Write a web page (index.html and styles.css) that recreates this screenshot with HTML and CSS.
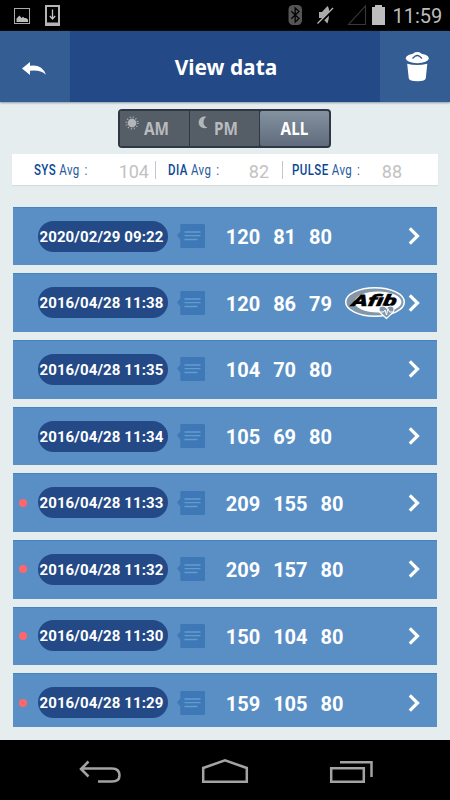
FILE: index.html
```
<!DOCTYPE html>
<html lang="en">
<head>
<meta charset="utf-8">
<title>View data</title>
<link rel="stylesheet" href="styles.css">
</head>
<body>
<svg class="defs" width="0" height="0">
  <symbol id="note" viewBox="0 0 28 26">
    <path d="M0 12.500 3.300 8.500V2.300Q3.300 1 4.600 1H26.800Q28 1 28 2.300V23.700Q28 25 26.800 25H4.600Q3.300 25 3.300 23.700V16.500Z" fill="#3e78b6"/>
    <path d="M7.500 9H23.500M7.500 12.700H23.500M7.500 16.500H20.500" stroke="#659bd0" stroke-width="1.300"/>
  </symbol>
  <symbol id="next" viewBox="0 0 12 18">
    <path d="M1.800 1.300 9.500 9 1.800 16.700" fill="none" stroke="#fff" stroke-width="3.200"/>
  </symbol>
</svg>
<div class="status">
  <svg class="status-left" width="60" height="31" viewBox="0 0 60 31">
    <rect x="14.500" y="8.500" width="15" height="15" fill="none" stroke="#aaa"/>
    <path d="M16.500 22V18.500L19.500 15.500 21.500 18 23 16.800 24.500 18H26L28 19.500V22Z" fill="#bbb"/>
    <path d="M45 5H60V26H45ZM47 7V22.500H58V7Z" fill="#b5b5b5" fill-rule="evenodd"/>
    <path d="M52.500 9.500V18M49.800 16 52.500 19 55.200 16" fill="none" stroke="#c4c4c4" stroke-width="1.300"/>
  </svg>
  <svg class="status-right" width="100" height="31" viewBox="288 0 100 31">
    <rect x="288.500" y="5" width="13.500" height="20" rx="4.500" fill="#555"/>
    <path d="M291.300 11.300 299 18.500 295.200 22V8L299 11.500 291.300 18.800" fill="none" stroke="#050505" stroke-width="1.300"/>
    <path d="M319 12H322L327.500 6Q329.500 8 329 14Q329 20 327.500 23.500L322 18H319Z" fill="#aaa"/>
    <path d="M318 24.500 333.500 9" stroke="#000" stroke-width="3"/>
    <path d="M317.500 23.500 333 8" stroke="#bbb" stroke-width="1.300"/>
    <path d="M348.500 24.500H365.500V6Z" fill="none" stroke="#383838" stroke-width="1.100"/>
    <path d="M372 7H375V5H382V7H385V25H372Z" fill="#bdbdbd"/>
  </svg>
  <span class="clock">11:59</span>
</div>
<header class="header">
  <div class="side">
    <svg width="26" height="14" viewBox="0 0 26 14"><path d="M0 6.500 8 0V3.700Q20 2 24 12.700Q18 7.500 8 8.800V13Z" fill="#fff"/></svg>
  </div>
  <h1 class="title">View data</h1>
  <div class="side trash">
    <svg width="24" height="30" viewBox="0 0 24 30">
      <path d="M2.200 11.800Q12 14.300 22.300 11.800L20.800 26Q20.500 29.300 12.500 29.300Q4 29.300 3.700 26Z" fill="#fff"/>
      <ellipse cx="12.300" cy="6.300" rx="11.500" ry="4.900" fill="#fff"/>
      <path d="M8 5.300Q8.300 1 12.300 1Q16 1 16.500 5.300" fill="none" stroke="#fff" stroke-width="2"/>
      <path d="M7.500 6.500 10 4.200Q12.300 2.800 14.500 4.200L17 6.500" fill="none" stroke="#30588e" stroke-width="1.300"/>
    </svg>
  </div>
</header>
<main class="main">
  <div class="tabs">
    <div class="tab">
      <svg class="tab-icon" width="14" height="14" viewBox="0 0 14 14"><circle cx="7" cy="7" r="4.300" fill="#b3b6b9"/><circle cx="7" cy="7" r="5.700" fill="none" stroke="#aaaeb2" stroke-width="1.900" stroke-dasharray="1 1.984"/></svg>
      <span class="tab-text">AM</span>
    </div>
    <div class="tab">
      <svg class="tab-icon" width="14" height="14" viewBox="0 0 14 14"><path d="M11.500 .8A5.900 5.900 0 1 0 12.500 11.500Q8.500 10 8.500 6.500Q8.500 2.500 11.500 .8Z" fill="#b3b6b9"/></svg>
      <span class="tab-text">PM</span>
    </div>
    <div class="tab tab-on"><span class="tab-text">ALL</span></div>
  </div>
  <div class="averages">
    <div class="avg sys"><span class="avg-label"><b>SYS</b> Avg <span class="colon">:</span></span><span class="avg-value">104</span></div>
    <div class="avg dia"><span class="avg-label"><b>DIA</b> Avg <span class="colon">:</span></span><span class="avg-value">82</span></div>
    <div class="avg pulse"><span class="avg-label"><b>PULSE</b> Avg <span class="colon">:</span></span><span class="avg-value">88</span></div>
  </div>
  <div class="list">
    <div class="row"><i class="dot"></i><span class="date">2020/02/29 09:22</span><svg class="note"><use href="#note"/></svg><div class="values"><span>120</span><span>81</span><span>80</span></div><svg class="next"><use href="#next"/></svg></div>
    <div class="row"><i class="dot"></i><span class="date">2016/04/28 11:38</span><svg class="note"><use href="#note"/></svg><div class="values"><span>120</span><span>86</span><span>79</span></div>
      <svg class="afib" width="62" height="34" viewBox="0 0 62 34">
        <ellipse cx="31" cy="16" rx="29.300" ry="14.300" fill="#8298aa" stroke="#fff" stroke-width="1.500"/>
        <ellipse cx="34" cy="16" rx="23.500" ry="10.500" fill="#fff"/>
        <text class="afib-text" transform="translate(7 19.500) skewX(-10)" textLength="45" lengthAdjust="spacingAndGlyphs">Afib</text>
        <path d="M42.500 32.500 35.500 26Q33.500 20 38.500 20Q41.500 20 42.500 22Q43.500 20 46.500 20Q51.500 20 49.500 26Z" fill="#8298aa" stroke="#fff" stroke-width="1.200"/>
        <path d="M36 26H39.500L41 24 42.500 29 43.800 22.500 45.500 26H49" fill="none" stroke="#fff"/>
      </svg>
      <svg class="next"><use href="#next"/></svg></div>
    <div class="row"><i class="dot"></i><span class="date">2016/04/28 11:35</span><svg class="note"><use href="#note"/></svg><div class="values"><span>104</span><span>70</span><span>80</span></div><svg class="next"><use href="#next"/></svg></div>
    <div class="row"><i class="dot"></i><span class="date">2016/04/28 11:34</span><svg class="note"><use href="#note"/></svg><div class="values"><span>105</span><span>69</span><span>80</span></div><svg class="next"><use href="#next"/></svg></div>
    <div class="row"><i class="dot dot-on"></i><span class="date">2016/04/28 11:33</span><svg class="note"><use href="#note"/></svg><div class="values"><span>209</span><span>155</span><span>80</span></div><svg class="next"><use href="#next"/></svg></div>
    <div class="row"><i class="dot dot-on"></i><span class="date">2016/04/28 11:32</span><svg class="note"><use href="#note"/></svg><div class="values"><span>209</span><span>157</span><span>80</span></div><svg class="next"><use href="#next"/></svg></div>
    <div class="row"><i class="dot dot-on"></i><span class="date">2016/04/28 11:30</span><svg class="note"><use href="#note"/></svg><div class="values"><span>150</span><span>104</span><span>80</span></div><svg class="next"><use href="#next"/></svg></div>
    <div class="row"><i class="dot dot-on"></i><span class="date">2016/04/28 11:29</span><svg class="note"><use href="#note"/></svg><div class="values"><span>159</span><span>105</span><span>80</span></div><svg class="next"><use href="#next"/></svg></div>
  </div>
</main>
<nav class="nav">
  <svg width="450" height="60" viewBox="0 0 450 60" fill="none" stroke="#a3a3a3" stroke-width="2.500">
    <path d="M88.500 21.500 81 29 88.500 36.500M81 28.500H112Q119.500 28.500 119.500 35.500Q119.500 41.500 112 41.500H98"/>
    <path d="M203.200 41.700V28L225 20.300 246.800 28V41.700Z"/>
    <path d="M331.200 28.200H363.800V41.700H331.200ZM340 22.200H371.500V37"/>
  </svg>
</nav>
</body>
</html>
```
FILE: styles.css
```
* { box-sizing: border-box; }
body {
  margin: 0;
  width: 450px;
  height: 800px;
  overflow: hidden;
  display: flex;
  flex-direction: column;
  background: #e5edef;
  font-family: Roboto, "Liberation Sans", sans-serif;
}
svg { display: block; flex: none; }
.defs { position: absolute; }
.status {
  height: 31px;
  flex: none;
  display: flex;
  background: #000;
}
.status-right { margin-left: 228px; }
.clock {
  margin-left: 4.500px;
  font-size: 20px;
  line-height: 33px;
  color: #bdbdbd;
}
.header {
  height: 70.500px;
  flex: none;
  display: flex;
  background: #234986;
  box-shadow: 0 1px 2px #8c9aaa;
  z-index: 1;
}
.side {
  width: 70px;
  display: flex;
  align-items: center;
  justify-content: center;
  background: #345d94;
  padding-top: 5px;
}
.trash { padding: 2px 0 0 3px; }
.title {
  flex: 1;
  margin: 0;
  text-align: center;
  font: bold 22px/71px "Noto Sans", sans-serif;
  color: #fff;
  padding-left: 2px;
  transform: scaleX(.95);
}
.main {
  flex: 1;
  min-height: 0;
  overflow: hidden;
  padding: 7.500px 12px 0;
}
.tabs {
  width: 213px;
  height: 39px;
  margin-left: 106px;
  padding: 2px;
  display: flex;
  gap: 1px;
  background: #303744;
  border-radius: 4px;
}
.tab {
  width: 69px;
  flex: none;
  display: flex;
  background: #555d67;
  color: #b8babc;
  padding-left: 5px;
}
.tab-icon { margin-top: 5px; }
.tab-text {
  font: bold 17px/36px "Noto Sans", sans-serif;
  transform: scaleX(.9);
  transform-origin: left;
  margin-left: 5px;
}
.tab-on {
  color: #fff;
  background: linear-gradient(#84919f, #606c7d);
  border-radius: 2px;
  justify-content: center;
  padding-left: 0;
}
.tab-on .tab-text { transform-origin: center; margin: 0; }
.averages {
  height: 31px;
  margin: 6px 0 0;
  width: 426px;
  display: flex;
  align-items: center;
  background: #fff;
  box-shadow: 0 1px 1px #d5dce0;
}
.avg {
  height: 18px;
  display: flex;
  justify-content: space-between;
  align-items: center;
  border-right: 1px solid #c5c8ca;
}
.sys { width: 144px; padding: 0 6px 0 22px; }
.dia { width: 127px; padding: 0 13px 0 12px; }
.pulse { width: 131px; padding: 0 12px 0 9px; border: 0; }
.avg-label {
  width: 60px;
  white-space: nowrap;
  color: #285a9d;
  font-size: 14px;
  letter-spacing: .5px;
  transform: scaleX(.82);
  transform-origin: left;
}
.avg-label b { font-weight: 500; color: #0b4795; }
.colon { margin-left: 2px; }
.avg-value {
  font-size: 18px;
  color: #c2c2c2;
  padding-top: 3px;
}
.list {
  margin: 21.800px 0 0 1px;
  width: 424px;
  height: 520.500px;
  overflow: hidden;
  display: flex;
  flex-direction: column;
  gap: 8.170px;
}
.row {
  height: 58.500px;
  flex: none;
  display: flex;
  align-items: center;
  background: #5a8fc6;
  border-top: 1px solid #4184c0;
  padding-bottom: 1px;
}
.dot { width: 8px; height: 8px; margin-left: 6px; border-radius: 50%; }
.dot-on { background: #ff666a; }
.date {
  width: 130px;
  height: 31px;
  margin-left: 11px;
  border-radius: 16px;
  background: #234986;
  color: #fff;
  font-weight: 700;
  font-size: 15px;
  letter-spacing: .1px;
  line-height: 33.500px;
  padding-left: 1.500px;
  white-space: nowrap;
}
.note { width: 28px; height: 26px; margin-left: 9px; }
.values {
  display: flex;
  gap: 13px;
  margin-left: 20.700px;
  padding-top: 2px;
  font-weight: 700;
  font-size: 20px;
  line-height: 24px;
  color: #fff;
}
.next { width: 12px; height: 18px; margin: 0 17px 0 auto; }
.afib { margin-left: 12px; }
.afib + .next { margin-left: auto; }
.afib-text {
  font: italic 900 16px Roboto, sans-serif;
  fill: #000;
  stroke: #000;
  stroke-width: .4px;
}
.nav { height: 60px; flex: none; background: #000; }
```
